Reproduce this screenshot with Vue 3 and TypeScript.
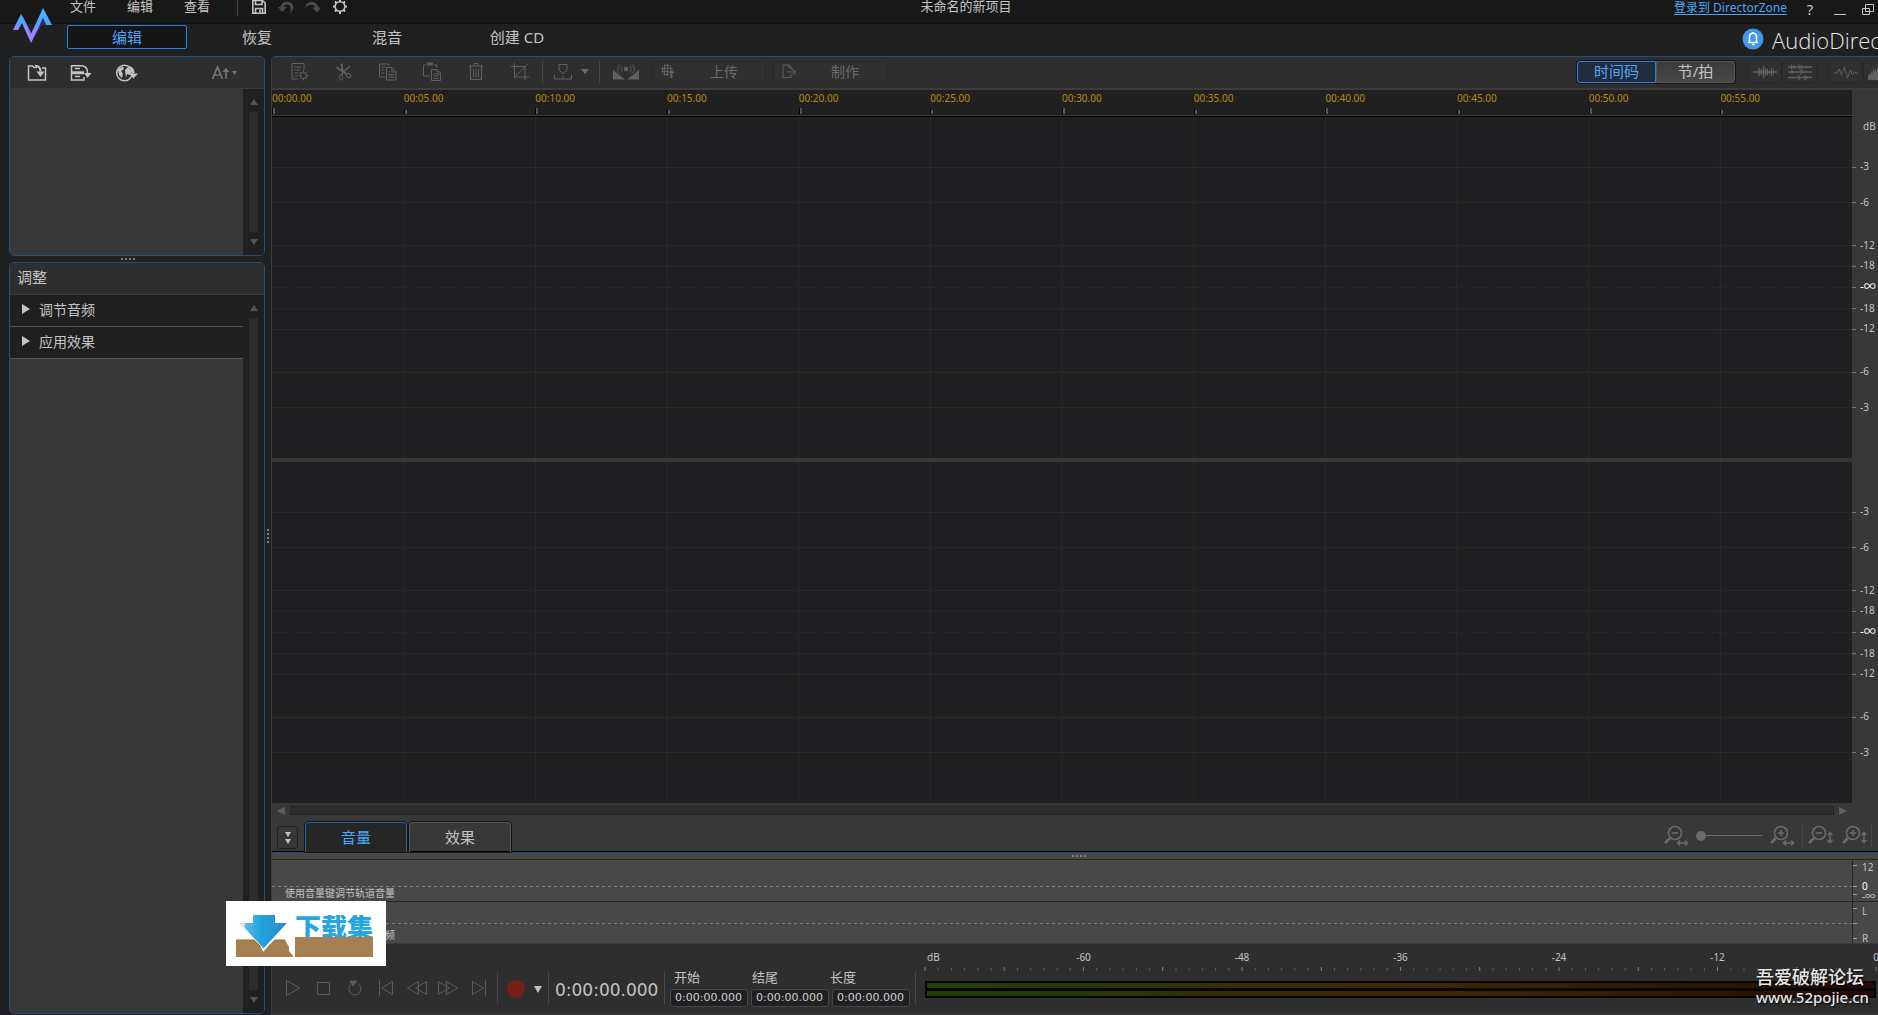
<script setup lang="ts">
import { ref } from 'vue'

interface ScaleMark {
  label: string
  at: string
  zero?: boolean
}

const modes = ['编辑', '恢复', '混音', '创建 CD']
const activeMode = ref('编辑')

const menus = ['文件', '编辑', '查看']

const times = Array.from({ length: 12 }, (_, i) => `00:${String(i * 5).padStart(2, '0')}.00`)
const columns = Array.from({ length: 11 }, (_, i) => `${((i + 1) * 100) / 12}%`)

const marks: ScaleMark[] = [
  { label: '-3', at: '14.8%' },
  { label: '-6', at: '25.1%' },
  { label: '-12', at: '37.7%' },
  { label: '-18', at: '43.8%' },
  { label: '-∞', at: '50%', zero: true },
  { label: '-18', at: '56.2%' },
  { label: '-12', at: '62.3%' },
  { label: '-6', at: '74.9%' },
  { label: '-3', at: '85.2%' },
]

const channels = ['left', 'right']

const meterTicks = Array.from({ length: 73 }, (_, i) => ({ at: `${(i * 100) / 72}%`, major: i % 6 === 0 }))
const meterLabels = [-60, -48, -36, -24, -12, 0].map((db) => ({ db, at: `${((db + 72) * 100) / 72}%` }))

const fields = ref([
  { id: 'start', label: '开始', value: '0:00:00.000' },
  { id: 'end', label: '结尾', value: '0:00:00.000' },
  { id: 'length', label: '长度', value: '0:00:00.000' },
])
const zoom = ref(0)
</script>

<template>
  <div class="app">
    <header class="header">
      <svg class="logo" width="67" height="56" viewBox="0 0 67 56" aria-hidden="true">
        <defs>
          <linearGradient id="brand" x1="0" y1="8" x2="0" y2="44" gradientUnits="userSpaceOnUse">
            <stop offset="0" stop-color="#4fb4ff" />
            <stop offset="0.48" stop-color="#4da6f8" />
            <stop offset="0.49" stop-color="#8d8cff" />
            <stop offset="1" stop-color="#9a86ff" />
          </linearGradient>
        </defs>
        <path d="M20 18 L23 17 L32 33 L42 12 L45 18 L31 43 Z" fill="#3a3f96" />
        <path d="M13 30 L21 14 L24 19 L31 34 L43 8 L52 25 L46 25 L43 18 L31 43 L22 23 L18 30 Z" fill="url(#brand)" />
        <path d="M40 25 L43 18 L46 25 Z" fill="#2b3070" />
      </svg>
      <div class="header-rows">
        <div class="titlebar">
          <div class="title-left">
            <nav class="menus">
              <button v-for="m in menus" :key="m" type="button">{{ m }}</button>
            </nav>
            <span class="sep title-sep"></span>
            <div class="quick">
              <button type="button" aria-label="保存">
                <svg width="18" height="15" viewBox="0 0 18 15" fill="none" stroke="#c4c4c4" stroke-width="1.6">
                  <path d="M2.8 0.5h9.5l2.9 2.5v10.2H2.800z" /><path d="M5.500 0v4.500h6.500V0M5.500 13V8.500h7V13" /><path d="M10 9.500v3" />
                </svg>
              </button>
              <button type="button" aria-label="撤消">
                <svg width="18" height="15" viewBox="0 0 18 15" fill="#4c4c4c"><path d="M1 7l9 0-5 5z" /><path d="M3.500 7C5 0 15 0 16.500 6.500c0 3-1.500 5-3.500 6.500 1.500-3 1-8-3-8.500-2 0-3 1-3.500 3z" /></svg>
              </button>
              <button type="button" aria-label="重做">
                <svg width="18" height="15" viewBox="0 0 18 15" fill="#4c4c4c"><path d="M17 7.500l-9 0 5 5z" /><path d="M1 8C2 0 13 0 14.500 8l-3 0C10 3.500 4.500 4 1 8z" /></svg>
              </button>
              <button type="button" aria-label="设置">
                <svg width="18" height="15" viewBox="0 0 18 15" fill="none" stroke="#c4c4c4">
                  <circle cx="9" cy="6.500" r="4.800" stroke-width="1.600" />
                  <path d="M9 1.500V0M9 14v-2M2 6.500h2M14 6.500h2M4 1.500l1.500 1.500M14 1.500L12.500 3M4 11.500L5.500 10M14 11.500L12.500 10" stroke-width="2" />
                </svg>
              </button>
            </div>
          </div>
          <h1 class="project">未命名的新项目</h1>
          <div class="title-right">
            <a href="#" class="signin">登录到 DirectorZone</a>
            <button type="button" class="help">?</button>
            <button type="button" class="win" aria-label="最小化">
              <svg width="14" height="18" viewBox="0 0 14 18"><path d="M1 14.500h12" stroke="#c4c4c4" /></svg>
            </button>
            <button type="button" class="win" aria-label="还原">
              <svg width="14" height="18" viewBox="0 0 14 18" fill="none" stroke="#c4c4c4"><path d="M4.500 4.500h8v7h-8zM1.500 8.500h7v6h-7z" /></svg>
            </button>
          </div>
        </div>
        <div class="modebar">
          <nav class="modes">
            <button
              v-for="m in modes" :key="m" type="button"
              :class="{ active: m === activeMode }" @click="activeMode = m"
            >{{ m }}</button>
          </nav>
          <div class="brand">
            <svg width="22" height="22" viewBox="0 0 22 22">
              <circle cx="11" cy="11" r="10.500" fill="#3f97ee" />
              <path d="M6 14.500h10M7.500 14V9c0-5 7-5 7 0v5M11 4v1.500M10 16.500h2.500" fill="none" stroke="#fff" stroke-width="1.600" />
            </svg>
            <span>AudioDirector</span>
          </div>
        </div>
      </div>
    </header>

    <main class="body">
      <aside class="side">
        <section class="panel library">
          <div class="panel-head tools">
            <button type="button" aria-label="导入文件">
              <svg width="20" height="18" viewBox="0 0 20 18" fill="none" stroke="#c4c4c4" stroke-width="1.500"><path d="M10 3.500H7L5.500 2H1.500v14h17V4H15" /><path d="M8 1.800c4 0 5.500 2 5.500 6" stroke-width="2" /><path d="M9.500 7.500h8L13.500 13z" fill="#c4c4c4" stroke="none" /></svg>
            </button>
            <button type="button" aria-label="导入媒体">
              <svg width="22" height="18" viewBox="0 0 22 18" fill="none" stroke="#c4c4c4" stroke-width="1.500"><path d="M13 1.800H1.500V8H14M14 9.500H1.500V16H14V13M5 4.500h5M5 12.500h5" /><path d="M13 2c3 .5 4.500 2.500 4.500 7" /><path d="M14 9h7.500l-4 5z" fill="#c4c4c4" stroke="none" /></svg>
            </button>
            <button type="button" aria-label="下载">
              <svg width="24" height="18" viewBox="0 0 24 18" fill="none" stroke="#c4c4c4" stroke-width="1.500"><circle cx="9.500" cy="9" r="7.800" /><path d="M3 5l5-2.500 1 2.500-3 2 2 3-1 4-3-3zM10 6l3-3 4 4-2 4-3-1-1 4z" fill="#c4c4c4" stroke="none" /><path d="M14 3c3 1 4.500 3 4.500 6" stroke-width="2" /><path d="M14 9.500h9l-4.500 5z" fill="#c4c4c4" stroke="none" /></svg>
            </button>
            <button type="button" class="sort" aria-label="排序">
              <svg width="28" height="16" viewBox="0 0 28 16" fill="none" stroke="#777" stroke-width="1.600"><path d="M1.500 14L6.500 2l5 12M3.500 10h6M15 14V5" /><path d="M11.500 7L15 3l3.500 4z" fill="#777" stroke="none" /><path d="M21 6h5l-2.500 4z" fill="#777" stroke="none" /></svg>
            </button>
          </div>
          <div class="panel-body">
            <div class="list"></div>
            <div class="vscroll"><i class="up"></i><span class="track"></span><i class="down"></i></div>
          </div>
        </section>
        <div class="hgrip side-grip"><i></i><i></i><i></i><i></i></div>
        <section class="panel adjust">
          <h2 class="panel-head">调整</h2>
          <div class="panel-body">
            <div class="list">
              <button type="button" class="fold"><i></i>调节音频</button>
              <button type="button" class="fold"><i></i>应用效果</button>
            </div>
            <div class="vscroll"><i class="up"></i><span class="track"></span><i class="down"></i></div>
          </div>
        </section>
      </aside>

      <div class="vgrip"><i></i><i></i><i></i><i></i></div>

      <section class="editor">
        <div class="toolbar">
          <button type="button" class="tool" aria-label="属性">
            <svg width="20" height="20" viewBox="0 0 20 20" class="ink"><path d="M8 17H2V1.500h12V8M4.500 5h7M4.500 8h6M4.500 11h4M4.500 14h3" /><circle cx="13.500" cy="13.500" r="3" /><path d="M13.500 8.500v2M13.500 16.500v2M8.500 13.500h2M16.500 13.500h2M10 10l1.500 1.500M17 10l-1.500 1.500M10 17l1.500-1.500M17 17l-1.500-1.500" /></svg>
          </button>
          <button type="button" class="tool" aria-label="剪切">
            <svg width="20" height="20" viewBox="0 0 20 20" class="ink"><path d="M7.500 1.500l1 7 3.500 3.500M2.500 5l5.500 4 3.500 2" stroke-width="2" /><path d="M16 4L9 10.500l-1.500 3" stroke-width="1.500" /><ellipse cx="14.500" cy="13.500" rx="2.500" ry="1.800" transform="rotate(35 14.500 13.500)" /><ellipse cx="7" cy="15.500" rx="1.600" ry="2.700" /></svg>
          </button>
          <button type="button" class="tool" aria-label="复制">
            <svg width="20" height="20" viewBox="0 0 20 20" class="ink"><path d="M7 15H1.500V2H11v2M3.500 5h4M3.500 8h3M3.500 11h3" /><path d="M8.500 5.500H14l4 4V18H8.500zM14 6v4h4M10.500 10h2M10.500 12.500h6M10.500 15h6" /></svg>
          </button>
          <button type="button" class="tool" aria-label="粘贴">
            <svg width="20" height="20" viewBox="0 0 20 20" class="ink"><path d="M8 14H1.500V3H4M12 3h3v3" /><path d="M5 2h6" stroke-width="3" /><path d="M9.500 7.500H15l3.500 3.500v7.500h-9zM15 8v4h3.500M11.500 12h2M11.500 14h5M11.500 16.500h5" /></svg>
          </button>
          <button type="button" class="tool" aria-label="删除">
            <svg width="20" height="20" viewBox="0 0 20 20" class="ink"><path d="M3 4h14M8 3.500v-2h4v2M4.500 4v13.500h11V4M7.500 7v8M10 7v8M12.500 7v8" /></svg>
          </button>
          <button type="button" class="tool" aria-label="裁剪">
            <svg width="20" height="20" viewBox="0 0 20 20" class="ink"><path d="M4.500 1v14H19M1 4.500h14V18M3.500 16L18 1.500" /></svg>
          </button>
          <span class="sep"></span>
          <button type="button" class="marker" aria-label="标记">
            <svg width="20" height="20" viewBox="0 0 20 20" class="ink"><path d="M6 2.500h8V8l-4 4-4-4zM1.500 13v4h17v-4M10 14v3" /></svg>
            <i></i>
          </button>
          <span class="sep"></span>
          <button type="button" class="stereo" aria-label="声像">
            <svg width="26" height="20" viewBox="0 0 26 20" class="ink"><path d="M0 8l12 9.500H0zM26 8l-12 9.500h12z" fill="#606060" stroke="none" /><circle cx="13" cy="7" r="2.300" fill="#606060" stroke="none" /><path d="M9.500 4c-2 2-2 4 0 6M16.500 4c2 2 2 4 0 6M7 2.500c-3 3-3 6.500 0 9M19 2.500c3 3 3 6.500 0 9" /></svg>
          </button>
          <button type="button" class="wide">
            <svg width="16" height="18" viewBox="0 0 16 18" class="ink"><path d="M4.500 3.500h5M1.500 6.500h11M1.500 9.500h8M3.500 12.500h5M4.500 2.500v11M7.500 2v12M10.500 3.500v4M2.500 5v6" /><path d="M8.500 11h6L11.500 7.500z" fill="#606060" stroke="none" /><path d="M11.500 11v5" stroke-width="2" /></svg>
            <span>上传</span>
          </button>
          <button type="button" class="wide">
            <svg width="16" height="18" viewBox="0 0 16 18" class="ink"><path d="M10 12v3.500H2V3h6l3 3v2M8 3v3h3M6 10h8M11.500 7l3 3-3 3" /></svg>
            <span>制作</span>
          </button>
          <div class="spring"></div>
          <div class="units">
            <button type="button" class="active">时间码</button>
            <button type="button">节/拍</button>
          </div>
          <div class="views">
            <button type="button" aria-label="波形视图">
              <svg width="26" height="20" viewBox="0 0 26 20" class="ink"><path d="M1 10h24M5.500 8v4M7.500 6v8M9.500 7v6M11.500 4v12M13.500 6v8M15.500 7v6M17.500 9v3M19.500 6v8M21.500 7.500v5" stroke-width="1.300" /></svg>
            </button>
            <button type="button" aria-label="多轨视图">
              <svg width="26" height="20" viewBox="0 0 26 20" class="ink"><path d="M1 5h24M1 10h24M1 15.500h24M4.500 2.500v5M7 3v4M12 2.500v5M14.500 3v4M19 3.500v3M5 8v4M14 7.500v5M16 8.500v3M12 13v5M18 13v5M20 14v3" stroke-width="1.300" /></svg>
            </button>
          </div>
          <div class="views clipped">
            <button type="button" aria-label="波形">
              <svg width="26" height="20" viewBox="0 0 26 20" class="ink"><path d="M1 11h3l2.500-4 2 6 3-8 3 11 3-8 2 5 2-3 1.500 1H25" /></svg>
            </button>
            <button type="button" aria-label="频谱">
              <svg width="26" height="20" viewBox="0 0 26 20"><path d="M0 18v-4l2-3v3l2-6v5l2-9v6l2-4v4l2-6v5l3-7v16z" fill="#606060" /></svg>
            </button>
          </div>
        </div>

        <div class="timeline">
          <div class="tracks">
            <div class="ruler">
              <div v-for="t in times" :key="t" class="stamp">{{ t }}</div>
            </div>
            <div v-for="c in channels" :key="c" class="plot">
              <svg width="100%" height="100%" stroke="#2b2b2d">
                <line v-for="x in columns" :key="x" :x1="x" :x2="x" y1="0" y2="100%" />
                <line
                  v-for="m in marks" :key="m.at" x1="0" x2="100%" :y1="m.at" :y2="m.at"
                  :stroke-dasharray="m.zero ? '3 3' : undefined"
                />
              </svg>
            </div>
          </div>
          <div class="scale">
            <div class="scale-top"></div>
            <div v-for="(c, i) in channels" :key="c" class="scale-part">
              <svg width="100%" height="100%">
                <text v-if="i === 0" x="11" y="13">dB</text>
                <template v-for="m in marks" :key="m.at">
                  <line x1="0" x2="4" :y1="m.at" :y2="m.at" stroke="#7a7a7a" />
                  <text x="8" :y="m.at" dy="3" :class="{ bright: m.zero }">{{ m.label }}</text>
                </template>
              </svg>
            </div>
          </div>
        </div>

        <div class="hscroll"><i class="prev"></i><span class="track"></span><i class="next"></i></div>

        <div class="lanebar">
          <button type="button" class="collapse" aria-label="折叠"><i></i><i></i></button>
          <button type="button" class="lanetab active">音量</button>
          <button type="button" class="lanetab">效果</button>
          <div class="spring"></div>
          <div class="hzoom">
            <button type="button" class="zoom" aria-label="水平缩小">
              <svg width="26" height="22" viewBox="0 0 26 22" class="glass"><circle cx="12" cy="8" r="6.500" /><path d="M9 8h6" /><path d="M7 13l-5 5" stroke-width="2.500" /><path d="M15 18h8M17 15.500L14.500 18l2.500 2.500M22 15.500l2.500 2.500-2.500 2.500" /></svg>
            </button>
            <input v-model="zoom" type="range" min="0" max="100" aria-label="缩放" />
            <button type="button" class="zoom" aria-label="水平放大">
              <svg width="26" height="22" viewBox="0 0 26 22" class="glass"><circle cx="12" cy="8" r="6.500" /><path d="M9 8h6M12 5v6" /><path d="M7 13l-5 5" stroke-width="2.500" /><path d="M15 18h8M17 15.500L14.500 18l2.500 2.500M22 15.500l2.500 2.500-2.500 2.500" /></svg>
            </button>
          </div>
          <span class="sep"></span>
          <button type="button" class="zoom" aria-label="垂直缩小">
            <svg width="26" height="22" viewBox="0 0 26 22" class="glass"><circle cx="12" cy="8" r="6.500" /><path d="M9 8h6" /><path d="M7 13l-5 5" stroke-width="2.500" /><path d="M23 8v9M20.500 10L23 7.500l2.500 2.500M20.500 15l2.500 2.500 2.500-2.500" /></svg>
          </button>
          <button type="button" class="zoom" aria-label="垂直放大">
            <svg width="26" height="22" viewBox="0 0 26 22" class="glass"><circle cx="12" cy="8" r="6.500" /><path d="M9 8h6M12 5v6" /><path d="M7 13l-5 5" stroke-width="2.500" /><path d="M23 8v9M20.500 10L23 7.500l2.500 2.500M20.500 15l2.500 2.500 2.500-2.500" /></svg>
          </button>
          <span class="sep"></span>
        </div>

        <div class="lanes">
          <div class="hgrip lane-grip"><i></i><i></i><i></i><i></i></div>
          <div class="lane">
            <div class="lane-plot">
              <svg width="100%" height="27"><line x1="0" x2="100%" y1="26.500" y2="26.500" stroke="#7c7c7c" stroke-dasharray="3 3" /></svg>
              <span>使用音量键调节轨道音量</span>
            </div>
            <svg class="lane-scale" width="26" height="41">
              <path d="M.5 0v41" stroke="#262626" /><path d="M1 5.500h4M1 26.500h4M1 34.500h4" stroke="#a0a0a0" />
              <text x="10" y="11">12</text><text x="10" y="30" class="bright">0</text><text x="10" y="40">-∞</text>
            </svg>
          </div>
          <div class="lane">
            <div class="lane-plot">
              <svg width="100%" height="27"><line x1="0" x2="100%" y1="21.500" y2="21.500" stroke="#7c7c7c" stroke-dasharray="3 3" /></svg>
              <span>使用平移键调节轨道音频</span>
            </div>
            <svg class="lane-scale" width="26" height="41">
              <path d="M.5 0v41" stroke="#262626" /><path d="M1 6.500h4M1 21.500h4M1 36.500h4" stroke="#a0a0a0" />
              <text x="10" y="13">L</text><text x="10" y="40">R</text>
            </svg>
          </div>
        </div>

        <div class="transport">
          <div class="controls">
            <button type="button" class="play" aria-label="播放"><svg width="22" height="18" viewBox="0 0 22 18" class="glyph"><path d="M4.500 1.500v15L17.500 9z" /></svg></button>
            <button type="button" class="play" aria-label="停止"><svg width="22" height="18" viewBox="0 0 22 18" class="glyph"><path d="M4.500 3.500h12v12h-12z" /></svg></button>
            <button type="button" class="play" aria-label="循环"><svg width="22" height="18" viewBox="0 0 22 18" class="glyph"><path d="M13.500 4.500c5 2 4.500 11-2.500 11.500-7-.5-7.500-8-4-10.500" /><path d="M6 2h7L9 7z" fill="#5c5c5c" /></svg></button>
            <button type="button" class="play" aria-label="开头"><svg width="22" height="18" viewBox="0 0 22 18" class="glyph"><path d="M4.500 1.500v15M17.500 2.500v13L6.500 9z" /></svg></button>
            <button type="button" class="play" aria-label="后退"><svg width="22" height="18" viewBox="0 0 22 18" class="glyph"><path d="M12.500 2.500v13L1.500 9zM20.500 2.500v13L9.500 9z" /></svg></button>
            <button type="button" class="play" aria-label="快进"><svg width="22" height="18" viewBox="0 0 22 18" class="glyph"><path d="M1.500 2.500v13L12.500 9zM9.500 2.500v13L20.500 9z" /></svg></button>
            <button type="button" class="play" aria-label="结尾"><svg width="22" height="18" viewBox="0 0 22 18" class="glyph"><path d="M17.500 1.500v15M4.500 2.500v13L15.500 9z" /></svg></button>
            <span class="sep tall"></span>
            <button type="button" class="record" aria-label="录音"><b></b><i></i></button>
            <span class="sep tall"></span>
            <output class="clock">0:00:00.000</output>
            <span class="sep tall"></span>
            <div class="fields">
              <div class="field-names">
                <label v-for="f in fields" :key="f.id" :for="f.id">{{ f.label }}</label>
              </div>
              <div class="field-boxes">
                <input v-for="f in fields" :id="f.id" :key="f.id" v-model="f.value" type="text" />
              </div>
            </div>
            <span class="sep tall"></span>
          </div>
          <div class="meter">
            <svg class="meter-scale" width="100%" height="34">
              <text x="2" y="17">dB</text>
              <text v-for="l in meterLabels" :key="l.db" :x="l.at" y="17" text-anchor="middle">{{ l.db }}</text>
              <line
                v-for="t in meterTicks" :key="t.at" :x1="t.at" :x2="t.at"
                :y1="t.major ? 23 : 24" y2="27" :stroke="t.major ? '#808080' : '#5a5a5a'"
              />
            </svg>
            <div class="bars"><i></i><i></i></div>
          </div>
        </div>
      </section>
    </main>

    <div class="badge">
      <svg width="57" height="49" viewBox="0 0 57 49" aria-hidden="true">
        <defs>
          <linearGradient id="down" x1="0" x2="1" y1="0" y2="0">
            <stop offset="0" stop-color="#69c3e6" /><stop offset="0.450" stop-color="#22a4de" /><stop offset="1" stop-color="#2e86cc" />
          </linearGradient>
        </defs>
        <path d="M0 25h18l10 10 11-10h10l4 7v4l5 6H0z" fill="#a68052" />
        <path d="M0 25h18l10 10 11-10h10" fill="none" stroke="#9a6a14" />
        <path d="M14 7l13.500 27L42 18" fill="#fff" stroke="#fff" stroke-width="3" />
        <path d="M17 0h22v8h12L27.500 33.500 4 8h13z" fill="url(#down)" />
        <path d="M3 8h6v6z" fill="#dcdcdc" />
      </svg>
      <div class="badge-word"><strong>下载集</strong><i></i></div>
    </div>

    <div class="credit">
      <span>吾爱破解论坛</span>
      <span>www.52pojie.cn</span>
    </div>
  </div>
</template>

<style>
html,
body {
  margin: 0;
  background: #202020;
}
</style>

<style scoped>
.app {
  position: relative;
  display: flex;
  flex-direction: column;
  height: 100vh;
  overflow: hidden;
  background: #202020;
  color: #c4c4c4;
  font-family: "Noto Sans", "Noto Sans CJK SC", sans-serif;
  font-size: 13px;
}
.app *,
.app *::before {
  box-sizing: border-box;
}
button {
  display: flex;
  align-items: center;
  justify-content: center;
  margin: 0;
  padding: 0;
  border: 0;
  background: none;
  color: inherit;
  font: inherit;
  flex-shrink: 0;
}
svg {
  display: block;
  flex-shrink: 0;
}
svg text {
  fill: #c4c4c4;
  font-size: 10px;
}
svg text.bright {
  fill: #fff;
}
.ink {
  fill: none;
  stroke: #606060;
}
.glass {
  fill: none;
  stroke: #6c6c6c;
  stroke-width: 1.5;
}
.glyph {
  fill: none;
  stroke: #5c5c5c;
}
.spring {
  flex: 1;
}
.sep {
  flex-shrink: 0;
  width: 1px;
  height: 22px;
  background: #484848;
}

/* header */
.header {
  display: flex;
  flex-shrink: 0;
  height: 56px;
  background: linear-gradient(#181818 23px, #121212 23px, #121212 24px, #202020 24px);
}
.header-rows {
  flex: 1;
  min-width: 0;
}
.titlebar {
  display: flex;
  height: 25px;
  line-height: 13px;
}
.title-left {
  display: flex;
  flex: 1 1 0;
  padding-left: 3px;
}
.menus {
  display: flex;
  gap: 31px;
  height: 13px;
}
.title-sep {
  height: 16px;
  margin: 0 12px 0 27px;
}
.quick {
  display: flex;
  gap: 9px;
  height: 15px;
}
.project {
  margin: 0;
  font-size: 13px;
  font-weight: 400;
  line-height: 12px;
}
.title-right {
  display: flex;
  flex: 1 1 16px;
  justify-content: flex-end;
  padding-right: 3px;
}
.signin {
  height: 15px;
  border-bottom: 1px solid #4da6f8;
  color: #4da6f8;
  font-size: 12px;
  line-height: 16px;
  text-decoration: none;
}
.help {
  width: 46px;
  height: 18px;
  font-size: 15px;
}
.win {
  height: 18px;
}
.win + .win {
  margin-left: 14px;
}
.modebar {
  display: flex;
  justify-content: space-between;
  height: 31px;
}
.modes {
  display: flex;
  gap: 10px;
}
.modes button {
  width: 120px;
  height: 24px;
  border: 1px solid transparent;
  border-radius: 2px;
  font-size: 15px;
  line-height: 22px;
}
.modes .active {
  border-color: #2f7fe0;
  background: #161617;
  color: #4da6f8;
}
.brand {
  display: flex;
  gap: 8px;
  width: 136px;
  padding-top: 3px;
  overflow: hidden;
}
.brand span {
  color: #e6e6e6;
  font-family: "Open Sans", "Noto Sans", sans-serif;
  font-size: 22px;
  font-weight: 300;
  line-height: 24px;
}

/* left side */
.body {
  display: flex;
  flex: 1;
  min-height: 0;
}
.side {
  display: flex;
  flex-direction: column;
  width: 256px;
  margin: 0 0 1px 9px;
  flex-shrink: 0;
}
.panel {
  display: flex;
  flex-direction: column;
  border: 1px solid #1f4f86;
  border-radius: 5px;
  overflow: hidden;
}
.library {
  height: 200px;
}
.adjust {
  flex: 1;
}
.panel-head {
  flex-shrink: 0;
  height: 32px;
  margin: 0;
  padding: 0 7px;
  border-bottom: 1px solid #3c3c3c;
  background: #2e2e2e;
  font-size: 15px;
  font-weight: 400;
  line-height: 28px;
}
.tools {
  display: flex;
  align-items: center;
  gap: 23px;
  padding: 0 25px 0 17px;
}
.tools .sort {
  margin-left: auto;
}
.panel-body {
  display: flex;
  flex: 1;
  min-height: 0;
}
.list {
  flex: 1;
  background: #383838;
}
.fold {
  justify-content: flex-start;
  gap: 9px;
  width: 100%;
  height: 32px;
  padding: 0 0 4px 12px;
  border-bottom: 1px solid #565656;
  background: #202020;
  font-size: 14px;
}
.fold i {
  border: solid transparent;
  border-width: 5px 0 5px 8px;
  border-left-color: #c4c4c4;
}
.vscroll {
  display: flex;
  flex-direction: column;
  align-items: center;
  gap: 7px;
  width: 21px;
  padding: 10px 0;
  background: #202020;
}
.vscroll .track {
  flex: 1;
  width: 9px;
  background: #2c2c2c;
}
.up,
.down {
  border: solid transparent;
  border-width: 0 4px 6px;
  border-bottom-color: #565656;
}
.down {
  border-width: 6px 4px 0;
  border-top-color: #565656;
}
.hgrip {
  display: flex;
  align-items: center;
  justify-content: center;
  gap: 2px;
  height: 6px;
}
.side-grip {
  padding-right: 18px;
}
.lane-grip {
  padding-left: 8px;
}
.hgrip i,
.vgrip i {
  width: 2px;
  height: 2px;
  background: #808080;
}
.vgrip {
  display: flex;
  flex-direction: column;
  align-items: center;
  justify-content: center;
  gap: 2px;
  width: 6px;
}

/* editor */
.editor {
  display: flex;
  flex: 1;
  flex-direction: column;
  min-width: 0;
  border-top: 1px solid #1f4f86;
  border-left: 1px solid #3c3c3c;
  border-top-left-radius: 5px;
  background: #383838;
}
.toolbar {
  display: flex;
  align-items: center;
  height: 33px;
  flex-shrink: 0;
  padding: 0 0 2px 6px;
  border-bottom: 2px solid #3c3c3c;
  background: #2e2e2e;
  border-top-left-radius: 4px;
}
.tool {
  width: 44px;
}
.marker {
  gap: 8px;
  width: 56px;
}
.marker i {
  border: solid transparent;
  border-width: 5px 4px 0;
  border-top-color: #6c6c6c;
}
.stereo {
  width: 52px;
}
.wide {
  width: 114px;
  height: 21px;
  padding: 0 0 2px 7px;
  border: 1px solid #282828;
  border-radius: 4px;
  background: #303030;
  color: #6c6c6c;
  font-size: 14px;
}
.wide + .wide {
  margin-left: 7px;
}
.wide span {
  flex: 1;
  padding-left: 7px;
  text-align: center;
}
.units {
  display: flex;
  height: 24px;
  border: 1px solid #161617;
  border-radius: 4px;
  background: #161617;
}
.units button {
  width: 79px;
  padding-bottom: 2px;
  border: 1px solid #565656;
  border-radius: 0 3px 3px 0;
  background: linear-gradient(#3c3c3c, #484848);
  font-size: 15px;
}
.units .active {
  border-color: #2f7fe0;
  border-radius: 3px 0 0 3px;
  background: #202c3c;
  color: #4da6f8;
}
.views {
  display: flex;
  height: 23px;
  margin-left: 11px;
}
.views button {
  width: 35px;
  border: 1px solid #282828;
  border-radius: 4px;
  background: #303030;
}
.clipped {
  width: 50px;
  overflow: hidden;
}
.timeline {
  display: flex;
  flex: 1;
  min-height: 0;
}
.tracks {
  display: flex;
  flex: 1;
  flex-direction: column;
  gap: 4px;
  min-width: 0;
}
.ruler {
  display: flex;
  flex-shrink: 0;
  height: 27px;
  margin-bottom: -4px;
  border-bottom: 1px solid #000;
  background: #202020;
  box-shadow: inset 0 -1px #3c3c3c;
}
.stamp {
  display: flex;
  flex: 1;
  flex-direction: column;
  justify-content: space-between;
  color: #b98a10;
  font-size: 10px;
  line-height: 16px;
}
.stamp::after {
  width: 2px;
  height: 6px;
  margin-bottom: 2px;
  border-left: 1px solid #000;
  background: #565656;
  content: "";
}
.stamp:nth-child(even)::after {
  height: 4px;
}
.plot {
  flex: 1;
  min-height: 0;
  background: #202022;
}
.scale {
  display: flex;
  flex-direction: column;
  gap: 4px;
  width: 26px;
}
.scale .bright {
  font-size: 12px;
}
.scale-top {
  height: 23px;
}
.scale-part {
  flex: 1;
  min-height: 0;
}
.hscroll {
  display: flex;
  align-items: center;
  gap: 5px;
  height: 16px;
  flex-shrink: 0;
  padding: 0 31px 1px 5px;
}
.hscroll .track {
  flex: 1;
  height: 9px;
  border: 1px solid #262626;
  background: #2e2e2e;
}
.prev,
.next {
  border: solid transparent;
  border-width: 4px 8px 4px 0;
  border-right-color: #606060;
}
.next {
  border-width: 4px 0 4px 8px;
  border-left-color: #606060;
}
.lanebar {
  display: flex;
  align-items: center;
  height: 34px;
  flex-shrink: 0;
  padding: 0 6px 0 5px;
  border-bottom: 1px solid #1f4f86;
  box-shadow: inset 0 -1px #000;
}
.collapse {
  flex-direction: column;
  gap: 2px;
  width: 21px;
  height: 23px;
  margin: 4px 7px 0 0;
  border: 1px solid #202020;
  border-radius: 3px;
}
.collapse i {
  border: solid transparent;
  border-width: 5px 3px 0;
  border-top-color: #c4c4c4;
}
.lanetab {
  align-self: flex-end;
  width: 102px;
  height: 30px;
  margin-right: 2px;
  padding-bottom: 2px;
  border: 1px solid #565656;
  border-bottom: 0;
  border-radius: 4px 4px 0 0;
  box-shadow: 0 0 0 1px #181818;
  font-size: 15px;
}
.lanetab.active {
  border-color: #1f5f9f;
  background: #262626;
  color: #4da6f8;
}
.lanebar .zoom {
  margin: 0 4px;
}
.hzoom {
  display: flex;
  align-items: center;
  padding-right: 3px;
}
.lanebar input {
  width: 66px;
  height: 12px;
  margin: 0 3px;
  background: linear-gradient(#6c6c6c, #6c6c6c) center / 100% 1px no-repeat;
  appearance: none;
}
.lanebar input::-webkit-slider-thumb {
  width: 10px;
  height: 10px;
  border-radius: 50%;
  background: #6c6c6c;
  appearance: none;
}
.lanes {
  flex-shrink: 0;
  border-bottom: 1px solid #3c3c3c;
  background: #484849;
}
.lane {
  display: flex;
  height: 42px;
  border-top: 1px solid #262626;
}
.lane-plot {
  display: flex;
  flex: 1;
  flex-direction: column;
  min-width: 0;
}
.lane-plot span {
  padding-left: 13px;
  font-size: 10px;
  line-height: 12px;
}

/* transport */
.transport {
  display: flex;
  height: 71px;
  flex-shrink: 0;
  border-bottom: 1px solid #3c3c3c;
  background: #2e2e2e;
}
.controls {
  display: flex;
  align-items: center;
  height: 36px;
  margin-top: 26px;
  padding-left: 5px;
}
.play {
  width: 31px;
}
.tall {
  height: 32px;
}
.play + .tall {
  margin-left: 3px;
}
.record {
  gap: 9px;
  width: 50px;
  padding: 2px 0 0 2px;
}
.record b {
  width: 18px;
  height: 18px;
  border-radius: 50%;
  background: #751f18;
}
.record i {
  border: solid transparent;
  border-width: 7px 4px 0;
  border-top-color: #c4c4c4;
}
.clock {
  width: 115px;
  padding: 4px 0 0 6px;
  font-family: "DejaVu Sans", sans-serif;
  font-size: 17px;
  line-height: 20px;
}
.fields {
  display: flex;
  flex-direction: column;
  gap: 5px;
  padding: 0 5px;
}
.field-names {
  display: flex;
  padding-left: 4px;
  line-height: 14px;
}
.field-names label {
  width: 78px;
}
.field-boxes {
  display: flex;
  gap: 3px;
}
.field-boxes input {
  width: 78px;
  height: 18px;
  padding: 0 4px;
  border: 1px solid #484848;
  border-radius: 3px;
  background: #202022;
  color: #d0d0d0;
  font-family: "DejaVu Sans", sans-serif;
  font-size: 11px;
}
.meter {
  flex: 1;
  min-width: 0;
  margin: 0 2px 0 9px;
}
.meter-scale {
  overflow: visible;
}
.bars {
  display: flex;
  flex-direction: column;
  gap: 3px;
  margin-top: 3px;
  padding: 2px;
  background: #080603;
}
.bars i {
  height: 5px;
  background: linear-gradient(90deg, #263d06, #26370a 17%, #382c08 35%, #402706 52%, #2e1a05 78%, #240b03);
}

/* overlays */
.badge {
  position: absolute;
  bottom: 49px;
  left: 226px;
  display: flex;
  width: 160px;
  height: 65px;
  padding: 14px 0 0 10px;
  background: #fff;
}
.badge-word {
  width: 78px;
  margin-left: 2px;
}
.badge-word strong {
  display: block;
  height: 22px;
  overflow: hidden;
  color: #27a5de;
  font-family: "Noto Sans CJK SC", sans-serif;
  font-size: 26px;
  font-weight: 900;
  line-height: 22px;
}
.badge-word i {
  display: block;
  height: 20px;
  background: #a68052;
}
.credit {
  position: absolute;
  right: 9px;
  bottom: 8px;
  display: flex;
  flex-direction: column;
  color: #e6e6e6;
  font-size: 18px;
  font-weight: 500;
  line-height: 20px;
  text-shadow: 1px 1px 2px #000;
}
.credit span + span {
  font-size: 15px;
}
</style>
